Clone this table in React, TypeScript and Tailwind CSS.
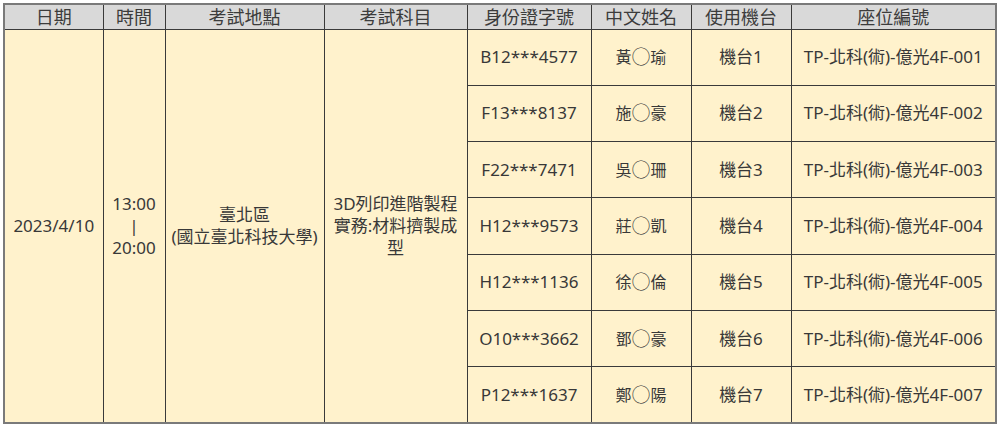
const rows = [
  { id: "B12***4577", name: "黃○瑜", machine: "機台1", seat: "TP-北科(術)-億光4F-001" },
  { id: "F13***8137", name: "施○豪", machine: "機台2", seat: "TP-北科(術)-億光4F-002" },
  { id: "F22***7471", name: "吳○珊", machine: "機台3", seat: "TP-北科(術)-億光4F-003" },
  { id: "H12***9573", name: "莊○凱", machine: "機台4", seat: "TP-北科(術)-億光4F-004" },
  { id: "H12***1136", name: "徐○倫", machine: "機台5", seat: "TP-北科(術)-億光4F-005" },
  { id: "O10***3662", name: "鄧○豪", machine: "機台6", seat: "TP-北科(術)-億光4F-006" },
  { id: "P12***1637", name: "鄭○陽", machine: "機台7", seat: "TP-北科(術)-億光4F-007" },
];

const headers = ["日期", "時間", "考試地點", "考試科目", "身份證字號", "中文姓名", "使用機台", "座位編號"];
const widths = ["w-[99px]", "w-[62px]", "w-[159px]", "w-[143px]", "w-[124px]", "w-[100px]", "w-[100px]", "w-[205px]"];

const cell = "border border-[#3a3a3a] p-0 text-center align-middle";

// masked name: the ○ is set a bit larger so it reads full-width like the CJK glyphs
function MaskedName({ name }: { name: string }) {
  const [first, last] = name.split("○");
  return (
    <span className="inline-flex items-center">
      {first}
      <span className="text-[19px] font-light leading-[22px]">○</span>
      {last}
    </span>
  );
}

export default function App() {
  return (
    <div className="bg-white p-[3px] font-['Noto_Sans','Noto_Sans_CJK_TC',sans-serif] text-[#383838]">
      <table className="w-[993px] table-fixed border-collapse border-2 border-[#7a7a7a]">
        <colgroup>
          {widths.map((w, i) => (
            <col key={i} className={w} />
          ))}
        </colgroup>
        <thead>
          <tr className="h-[25px] bg-[#d9d9d9]">
            {headers.map((h) => (
              <th key={h} className={`${cell} text-[18px] font-normal leading-none text-[#3c3c3c]`}>
                {h}
              </th>
            ))}
          </tr>
        </thead>
        <tbody className="bg-[#fff2cc] text-[17px] leading-[22px]">
          {rows.map((r, i) => (
            <tr key={r.id} className="h-[56.3px]">
              {i === 0 && (
                <>
                  <td rowSpan={7} className={cell}>2023/4/10</td>
                  <td rowSpan={7} className={cell}>
                    13:00
                    <br />|
                    <br />20:00
                  </td>
                  <td rowSpan={7} className={`${cell} whitespace-nowrap`}>
                    臺北區
                    <br />(國立臺北科技大學)
                  </td>
                  <td rowSpan={7} className={`${cell} whitespace-nowrap`}>
                    3D列印進階製程
                    <br />實務:材料擠製成
                    <br />型
                  </td>
                </>
              )}
              <td className={cell}>{r.id}</td>
              <td className={`${cell} text-[16px]`}>
                <MaskedName name={r.name} />
              </td>
              <td className={cell}>{r.machine}</td>
              <td className={`${cell} whitespace-nowrap`}>{r.seat}</td>
            </tr>
          ))}
        </tbody>
      </table>
    </div>
  );
}
